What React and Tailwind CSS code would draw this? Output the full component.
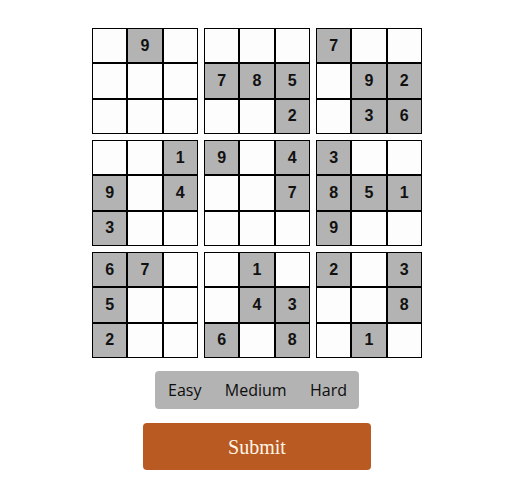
import React from 'react';

const BLOCKS = [
  ['.9.', '...', '...'],
  ['...', '785', '..2'],
  ['7..', '.92', '.36'],
  ['..1', '9.4', '3..'],
  ['9.4', '..7', '...'],
  ['3..', '851', '9..'],
  ['67.', '5..', '2..'],
  ['.1.', '.43', '6.8'],
  ['2.3', '..8', '.1.'],
];

function Block({ rows }) {
  const cells = rows.join('').split('');
  return (
    <div className="grid grid-cols-3 grid-rows-3 w-[106px] h-[106px]">
      {cells.map((c, i) => (
        <div
          key={i}
          className={`flex items-center justify-center border border-black text-[16px] font-bold text-[#111] ${
            c === '.' ? 'bg-[#fdfdfd]' : 'bg-[#b3b3b3]'
          }`}
        >
          {c === '.' ? '' : c}
        </div>
      ))}
    </div>
  );
}

export default function App() {
  return (
    <div className="w-[514px] h-[501px] bg-white flex flex-col items-center pt-[28px] font-['Liberation_Sans',Arial,sans-serif]">
      {/* Board */}
      <div className="grid grid-cols-3 gap-[6px]">
        {BLOCKS.map((b, i) => (
          <Block key={i} rows={b} />
        ))}
      </div>

      {/* Difficulty */}
      <div className="mt-[13px] w-[204px] h-[38px] rounded-[4px] bg-[#b3b3b3] flex items-center justify-between pl-[13px] pr-[12px] font-['Open_Sans',sans-serif] font-medium text-[16px] text-[#0d0d0d]">
        <span>Easy</span>
        <span>Medium</span>
        <span>Hard</span>
      </div>

      {/* Submit */}
      <button className="mt-[14px] w-[228px] h-[47px] rounded-[4px] bg-[#b95a22] text-[#fff6e6] text-[20px] font-['Liberation_Serif',serif]">
        Submit
      </button>
    </div>
  );
}
